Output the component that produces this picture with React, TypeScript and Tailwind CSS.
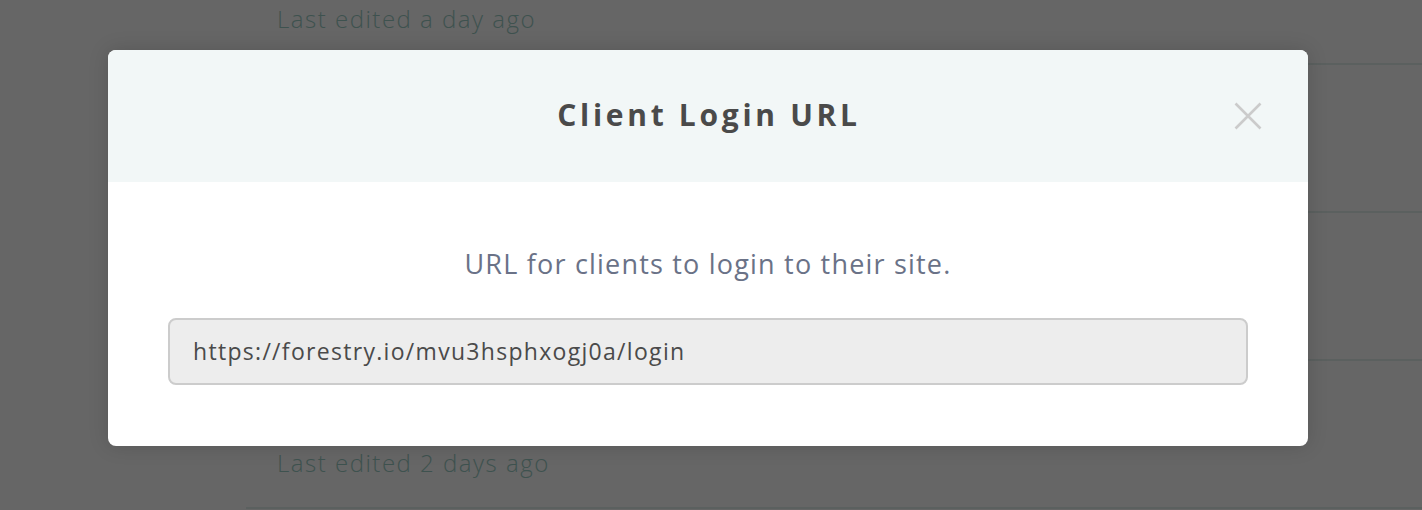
const items = ["Last edited a day ago", "", "", "Last edited 2 days ago"];

function CloseIcon() {
  return (
    <svg width="28" height="28" viewBox="0 0 28 28" fill="none" stroke="currentColor" strokeWidth="2.6">
      <path d="M1.5 1.5 L26.5 26.5 M26.5 1.5 L1.5 26.5" />
    </svg>
  );
}

export default function App() {
  return (
    <div className="relative h-[510px] w-full overflow-hidden bg-[#666666] font-['Open_Sans',sans-serif]">
      <div className="-mt-[83px] pl-[246px]">
        {items.map((label, i) => (
          <div key={i} className="flex h-[148px] items-end border-b-2 border-[#5b605f] pb-[32px] pl-[31px]">
            <span className="text-[24px] font-light leading-none tracking-[1.5px] text-[#3e524f]">{label}</span>
          </div>
        ))}
      </div>

      <div className="absolute inset-0 pl-[108px] pt-[50px]">
        <div className="w-[1200px] overflow-hidden rounded-[8px] bg-white shadow-[0_0_20px_rgba(0,0,0,0.15)]">
          <div className="relative flex h-[132px] items-center justify-center bg-[#f2f7f7] pb-[4px] pl-[2px]">
            <h2 className="text-[30px] font-bold tracking-[3.7px] text-[#4a4a4a]">Client Login URL</h2>
            <button className="absolute right-[46px] top-[52px] text-[#cbcbcb]">
              <CloseIcon />
            </button>
          </div>
          <div className="px-[60px] pb-[61px] pt-[64px]">
            <p className="text-center text-[27px] leading-[36px] tracking-[1.2px] text-[#6a7287]">
              URL for clients to login to their site.
            </p>
            <div className="mt-[36px] flex h-[67px] items-center rounded-[8px] border-2 border-[#cccccc] bg-[#ededed] px-[23px]">
              <span className="text-[23px] tracking-[1.3px] text-[#4a4a4a]">https://forestry.io/mvu3hsphxogj0a/login</span>
            </div>
          </div>
        </div>
      </div>
    </div>
  );
}
